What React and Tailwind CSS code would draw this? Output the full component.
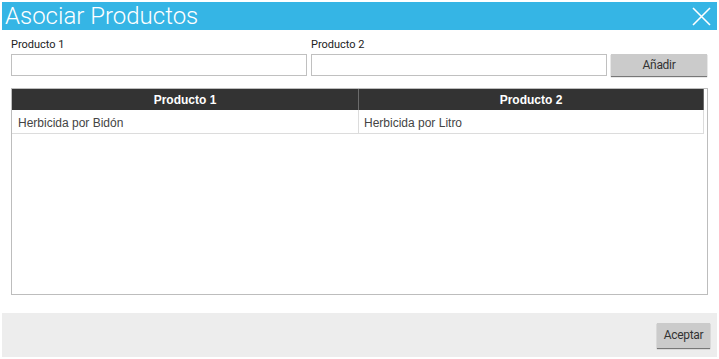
export default function App() {
  const rows = [["Herbicida por Bidón", "Herbicida por Litro"]];

  return (
    <div className="w-[719px] h-[359px] bg-white p-[2px] flex flex-col" style={{ fontFamily: "Roboto, 'Liberation Sans', sans-serif" }}>
      {/* title bar */}
      <div className="h-[28px] bg-[#35b5e5] flex items-center justify-between pl-[3px] pr-[6px] shrink-0">
        <span className="text-white text-[24px] font-light leading-none">Asociar Productos</span>
        <svg width="19" height="19" viewBox="0 0 19 19" className="text-white">
          <path d="M1 1 L18 18 M18 1 L1 18" stroke="currentColor" strokeWidth="1.6" />
        </svg>
      </div>

      {/* form */}
      <div className="flex items-end gap-[4px] px-[9px] pt-[9px]">
        <div className="flex flex-col w-[296px]">
          <label className="text-[11px] text-[#222] leading-none mb-[4px]">Producto 1</label>
          <input className="h-[22px] border border-[#c0c0c0] bg-white outline-none" />
        </div>
        <div className="flex flex-col w-[296px]">
          <label className="text-[11px] text-[#222] leading-none mb-[4px]">Producto 2</label>
          <input className="h-[22px] border border-[#c0c0c0] bg-white outline-none" />
        </div>
        <button className="w-[96px] h-[22px] bg-[#cbcbcb] shadow-[0_1px_1px_#777] text-[12px] text-[#333] tracking-[-0.3px]">
          Añadir
        </button>
      </div>

      {/* table */}
      <div className="mx-[9px] mt-[12px] h-[207px] border border-[#bdbdbd] flex flex-col" style={{ fontFamily: "'Liberation Sans', Arial, sans-serif" }}>
        <div className="flex h-[21px] bg-[#333333] mr-[3px] text-white text-[12px] font-bold">
          <div className="w-[347px] flex items-center justify-center border-r border-[#6b6b6b]">Producto 1</div>
          <div className="flex-1 flex items-center justify-center border-r border-[#6b6b6b]">Producto 2</div>
        </div>
        {rows.map((r, i) => (
          <div key={i} className="flex h-[24px] mr-[3px] text-[12px] text-[#444] border-b border-[#dcdcdc]">
            <div className="w-[347px] flex items-center pl-[6px] pt-[2px] border-r border-[#dcdcdc]">{r[0]}</div>
            <div className="flex-1 flex items-center pl-[5px] pt-[2px] border-r border-[#dcdcdc]">{r[1]}</div>
          </div>
        ))}
      </div>

      {/* footer */}
      <div className="mt-auto h-[44px] bg-[#ededed] flex items-center justify-end pr-[7px]">
        <button className="w-[53px] h-[25px] bg-[#cbcbcb] shadow-[0_1px_1px_#777] text-[12px] text-[#333] tracking-[-0.3px]">
          Aceptar
        </button>
      </div>
    </div>
  );
}
